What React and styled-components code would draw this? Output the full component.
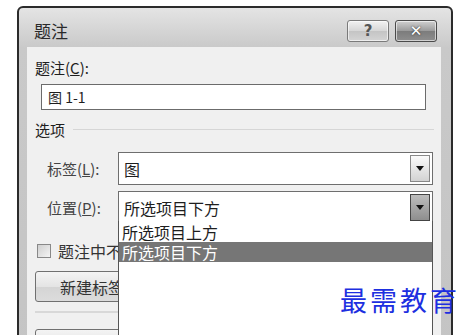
import { styled, createGlobalStyle } from "styled-components"

const Global = createGlobalStyle`
    body {
        margin: 0;
        background: #fff;
        font-family: "Noto Sans CJK SC", "Liberation Sans", sans-serif;
        overflow: hidden;
    }
`
const Page = styled.div`
    width: 463px;
    height: 335px;
    position: relative;
    overflow: hidden;
`
const Window = styled.div`
    margin: 6px 0 0 17px;
    width: 436px;
    height: 360px;
    box-sizing: border-box;
    border: 2px solid #2b2b2b;
    border-radius: 6px 6px 0 0;
    background: linear-gradient(#e4e4e4, #c9c9c9 40px, #c4c4c4);
    padding: 0 10px 0 8px;
    display: flex;
    flex-direction: column;
`
const TitleBar = styled.div`
    height: 39px;
    display: flex;
    align-items: center;
    justify-content: space-between;
    padding-left: 7px;
`
const Title = styled.div`
    font-size: 17px;
    color: #2a2a2a;
    padding-top: 6px;
`
const Controls = styled.div`
    display: flex;
    gap: 6px;
    padding-top: 6px;
    margin-right: 4px;
`
const CtrlButton = styled.div`
    width: 40px;
    height: 20px;
    border: 1px solid ${p => (p.$dark ? "#4a4a4a" : "#7a7a7a")};
    border-radius: 3px;
    background: ${p => (p.$dark
        ? "linear-gradient(#d0d0d0, #9a9a9a 50%, #7c7c7c 51%, #8e8e8e)"
        : "linear-gradient(#f2f2f2, #d6d6d6 50%, #c4c4c4 51%, #d4d4d4)")};
    display: flex;
    align-items: center;
    justify-content: center;
    font: bold 15px "DejaVu Sans", sans-serif;
    color: ${p => (p.$dark ? "#fff" : "#555")};
    text-shadow: ${p => (p.$dark ? "0 0 2px #222" : "none")};
    box-shadow: inset 0 0 0 1px rgba(255,255,255,0.6);
`
const Client = styled.div`
    flex: 1;
    background: #f0f0f0;
    padding: 12px 7px 0 8px;
    position: relative;
    color: #1e1e1e;
`
const Label = styled.div`
    font-size: 15px;
    line-height: 18px;
`
const Input = styled.div`
    margin: 7px 0 0 6px;
    width: 385px;
    height: 26px;
    border: 1px solid #6b6b6b;
    background: #fff;
    font-size: 14px;
    line-height: 24px;
    padding-left: 6px;
    box-sizing: border-box;
`
const Group = styled.div`
    display: flex;
    align-items: center;
    gap: 8px;
    margin-top: 9px;
    font-size: 15px;
    &::after {
        content: "";
        flex: 1;
        height: 1px;
        background: #d6d6d6;
    }
`
const Row = styled.div`
    display: flex;
    align-items: center;
    margin-top: ${p => p.$top}px;
`
const RowLabel = styled.div`
    width: 83px;
    padding-left: 12px;
    box-sizing: border-box;
    font-size: 15px;
    color: #444;
`
const Select = styled.div`
    width: 315px;
    height: 33px;
    border: 1px solid #6e6e6e;
    background: #fff;
    display: flex;
    align-items: center;
    justify-content: space-between;
    box-sizing: border-box;
    padding: 2px;
    font-size: 16px;
`
const SelectText = styled.span`
    padding-left: 3px;
`
const Arrow = styled.div`
    width: 20px;
    height: 27px;
    border: 1px solid ${p => (p.$pressed ? "#444" : "#888")};
    background: ${p => (p.$pressed
        ? "linear-gradient(#bdbdbd, #8e8e8e)"
        : "linear-gradient(#fafafa, #d2d2d2)")};
    display: flex;
    align-items: center;
    justify-content: center;
    box-sizing: border-box;
    &::before {
        content: "";
        border-left: 4px solid transparent;
        border-right: 4px solid transparent;
        border-top: 5px solid #111;
    }
`
const CheckRow = styled.div`
    display: flex;
    align-items: center;
    gap: 7px;
    margin-top: 15px;
    font-size: 16px;
    color: #333;
`
const Box = styled.div`
    width: 12px;
    height: 12px;
    border: 1px solid #888;
    background: linear-gradient(135deg, #cfcfcf, #f4f4f4);
    margin-left: 2px;
`
const Button = styled.div`
    margin-top: ${p => p.$top}px;
    width: 120px;
    height: 31px;
    border: 1px solid #707070;
    border-radius: 3px;
    background: linear-gradient(#f4f4f4, #e4e4e4 50%, #d4d4d4 51%, #dcdcdc);
    display: flex;
    align-items: center;
    padding-left: 24px;
    box-sizing: border-box;
    font-size: 16px;
    color: #333;
`
const Separator = styled.div`
    margin-top: 9px;
    width: 120px;
    height: 2px;
    background: #d8d8d8;
`
const List = styled.div`
    position: absolute;
    left: 91px;
    top: 174px;
    width: 315px;
    height: 160px;
    border: 1px solid #555;
    border-top: none;
    background: #fff;
    box-sizing: border-box;
    padding-top: 1px;
    z-index: 1;
`
const Item = styled.div`
    height: 20px;
    line-height: 20px;
    font-size: 16px;
    padding-left: 3px;
    background: ${p => (p.$active ? "#767676" : "transparent")};
    color: ${p => (p.$active ? "#fff" : "#1e1e1e")};
`
const Watermark = styled.div`
    position: absolute;
    left: 340px;
    top: 280px;
    font-family: "Noto Sans CJK SC", sans-serif;
    font-size: 27px;
    letter-spacing: 3px;
    color: #1d2fe0;
    z-index: 2;
`

const App = () => {
    return (
        <Page>
            <Global />
            <Window>
                <TitleBar>
                    <Title>题注</Title>
                    <Controls>
                        <CtrlButton>?</CtrlButton>
                        <CtrlButton $dark>✕</CtrlButton>
                    </Controls>
                </TitleBar>
                <Client>
                    <Label>题注(<u>C</u>):</Label>
                    <Input>图 1-1</Input>
                    <Group>选项</Group>
                    <Row $top={12}>
                        <RowLabel>标签(<u>L</u>):</RowLabel>
                        <Select>
                            <SelectText>图</SelectText>
                            <Arrow />
                        </Select>
                    </Row>
                    <Row $top={6}>
                        <RowLabel>位置(<u>P</u>):</RowLabel>
                        <Select>
                            <SelectText>所选项目下方</SelectText>
                            <Arrow $pressed />
                        </Select>
                    </Row>
                    <CheckRow>
                        <Box />
                        <span>题注中不包含标签</span>
                    </CheckRow>
                    <Button $top={8}>新建标签...</Button>
                    <Separator />
                    <Button $top={16}>编号...</Button>
                    <List>
                        <Item>所选项目上方</Item>
                        <Item $active>所选项目下方</Item>
                    </List>
                </Client>
            </Window>
            <Watermark>最需教育</Watermark>
        </Page>
    )
}

export default App
